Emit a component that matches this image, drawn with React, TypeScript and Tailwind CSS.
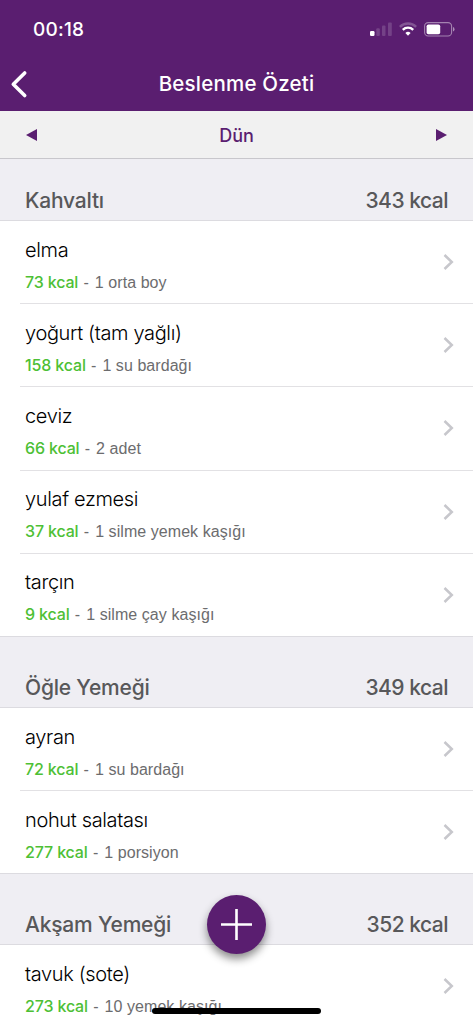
type Food = { name: string; kcal: number; portion: string }
type Meal = { title: string; total: number; foods: Food[] }

const meals: Meal[] = [
  {
    title: 'Kahvaltı',
    total: 343,
    foods: [
      { name: 'elma', kcal: 73, portion: '1 orta boy' },
      { name: 'yoğurt (tam yağlı)', kcal: 158, portion: '1 su bardağı' },
      { name: 'ceviz', kcal: 66, portion: '2 adet' },
      { name: 'yulaf ezmesi', kcal: 37, portion: '1 silme yemek kaşığı' },
      { name: 'tarçın', kcal: 9, portion: '1 silme çay kaşığı' },
    ],
  },
  {
    title: 'Öğle Yemeği',
    total: 349,
    foods: [
      { name: 'ayran', kcal: 72, portion: '1 su bardağı' },
      { name: 'nohut salatası', kcal: 277, portion: '1 porsiyon' },
    ],
  },
  {
    title: 'Akşam Yemeği',
    total: 352,
    foods: [{ name: 'tavuk (sote)', kcal: 273, portion: '10 yemek kaşığı' }],
  },
]

export default function App() {
  return (
    <div className="relative flex h-[1024px] w-[473px] flex-col overflow-hidden bg-white font-['Inter','Liberation_Sans',sans-serif]">
      <header className="h-[111px] shrink-0 bg-[#5a1e70] text-white">
        <StatusBar />
        <div className="grid h-[51px] grid-cols-[60px_1fr_60px] items-center">
          <button type="button" aria-label="Geri" className="pl-[10px]">
            <svg width="18" height="30" viewBox="0 0 18 30" fill="none" stroke="currentColor" strokeWidth="3.6" strokeLinecap="round" strokeLinejoin="round">
              <path d="M14.7 4 3.3 15.3 14.7 26.5" />
            </svg>
          </button>
          <h1 className="text-center text-[20.5px] leading-6 font-medium tracking-[0.2px]">Beslenme Özeti</h1>
        </div>
      </header>

      <nav className="flex h-12 shrink-0 items-center justify-between border-b border-[#c8c7cc] bg-[#f1f1f1] px-[26px] text-[#5a1e70]">
        <svg width="11" height="12" viewBox="0 0 11 12" fill="currentColor"><path d="M0 6 11 0v12z" /></svg>
        <span className="pt-[2px] text-[18px] font-medium">Dün</span>
        <svg width="11" height="12" viewBox="0 0 11 12" fill="currentColor"><path d="M11 6 0 0v12z" /></svg>
      </nav>

      <main>
        {meals.map((meal, i) => (
          <MealSection key={meal.title} meal={meal} first={i === 0} />
        ))}
      </main>

      <button
        type="button" aria-label="Ekle"
        className="absolute top-[895px] left-[207px] flex size-[59px] items-center justify-center rounded-full bg-[#5a1e70] shadow-[0_5px_9px_rgba(0,0,0,0.45)]"
      >
        <svg width="31" height="31" viewBox="0 0 31 31" stroke="#fff" strokeWidth="2.6"><path d="M15.5 0v31M0 15.5h31" /></svg>
      </button>
      <div className="absolute top-[1007.5px] left-[152px] h-[6px] w-[169px] rounded-full bg-black" />
    </div>
  )
}

const MealSection = ({ meal, first }: { meal: Meal; first: boolean }) => (
  <section>
    <div
      className={
        'flex items-end justify-between border-b border-[#dcdbe0] bg-[#efeef3] px-[25px] pb-[6px] text-[21px] leading-[26px] font-medium text-[#58585a] ' +
        (first ? 'h-[62px]' : 'h-[71px]')
      }
    >
      <h2 className="tracking-[-0.2px]">{meal.title}</h2>
      <span className="tracking-[-0.5px]">{meal.total} kcal</span>
    </div>
    <ul>
      {meal.foods.map((food, i) => (
        <FoodRow key={food.name} food={food} last={i === meal.foods.length - 1} />
      ))}
    </ul>
  </section>
)

const FoodRow = ({ food, last }: { food: Food; last: boolean }) => (
  <li className={last ? 'border-b border-[#dcdbe0]' : ''}>
    <div
      className={
        'ml-[20px] flex items-center justify-between pr-[19px] pl-[5px] ' +
        (last ? 'h-[82.2px]' : 'h-[83.2px] border-b border-[#e2e1e4]')
      }
    >
      <div className="pt-[5px] whitespace-nowrap">
        <div className="text-[20px] leading-[26px] font-light tracking-[-0.35px] text-black">{food.name}</div>
        <div className="mt-[9px] text-[16px] leading-5 text-[#6c6c6e]">
          <span className="font-medium tracking-[-0.15px] text-[#4dc035]">{food.kcal} kcal</span>
          <span className="font-['Liberation_Sans',sans-serif] tracking-[0.06px]">
            <span className="tracking-[0.8px]"> - </span>
            {food.portion}
          </span>
        </div>
      </div>
      <svg width="11" height="16" viewBox="0 0 11 16" fill="none" stroke="#c7c7cc" strokeWidth="2.5"><path d="M1.5 1 8.8 8 1.5 15" /></svg>
    </div>
  </li>
)

const StatusBar = () => (
  <div className="flex h-[58px] items-center justify-between pr-[18px] pl-[33px]">
    <span className="pt-[2px] text-[19px] font-medium tracking-[0.2px]">00:18</span>
    <div className="flex items-center gap-[7px]">
      <svg width="22" height="14" viewBox="0 0 22 14" fill="#fff">
        <rect y="9" width="4.5" height="5" rx="1.2" />
        <g fillOpacity="0.16">
          <rect x="6.3" y="6.3" width="3.5" height="7.7" rx="1" />
          <rect x="12" y="3.5" width="3.5" height="10.5" rx="1" />
          <rect x="18" y="0.5" width="3.8" height="13.5" rx="1" />
        </g>
      </svg>
      <svg width="18" height="14" viewBox="0 0 18 14" fill="none" stroke="#fff" strokeWidth="2.4">
        <path d="M.9 4.8a11.5 11.5 0 0 1 16.2 0" strokeOpacity="0.25" />
        <path d="M3.8 7.8a7.4 7.4 0 0 1 10.4 0" />
        <path d="M9 13.7 6.4 11a3.7 3.7 0 0 1 5.2 0z" fill="#fff" stroke="none" />
      </svg>
      <svg width="31" height="15" viewBox="0 0 31 15" fill="none">
        <rect x=".6" y=".6" width="27" height="13.4" rx="3.6" stroke="#fff" strokeOpacity="0.45" strokeWidth="1.1" />
        <rect x="2.6" y="2.4" width="13.6" height="9.8" rx="1.8" fill="#fff" />
        <path d="M29 5v4.6q1.5-.6 1.5-2.3T29 5z" fill="#fff" fillOpacity="0.5" />
      </svg>
    </div>
  </div>
)
